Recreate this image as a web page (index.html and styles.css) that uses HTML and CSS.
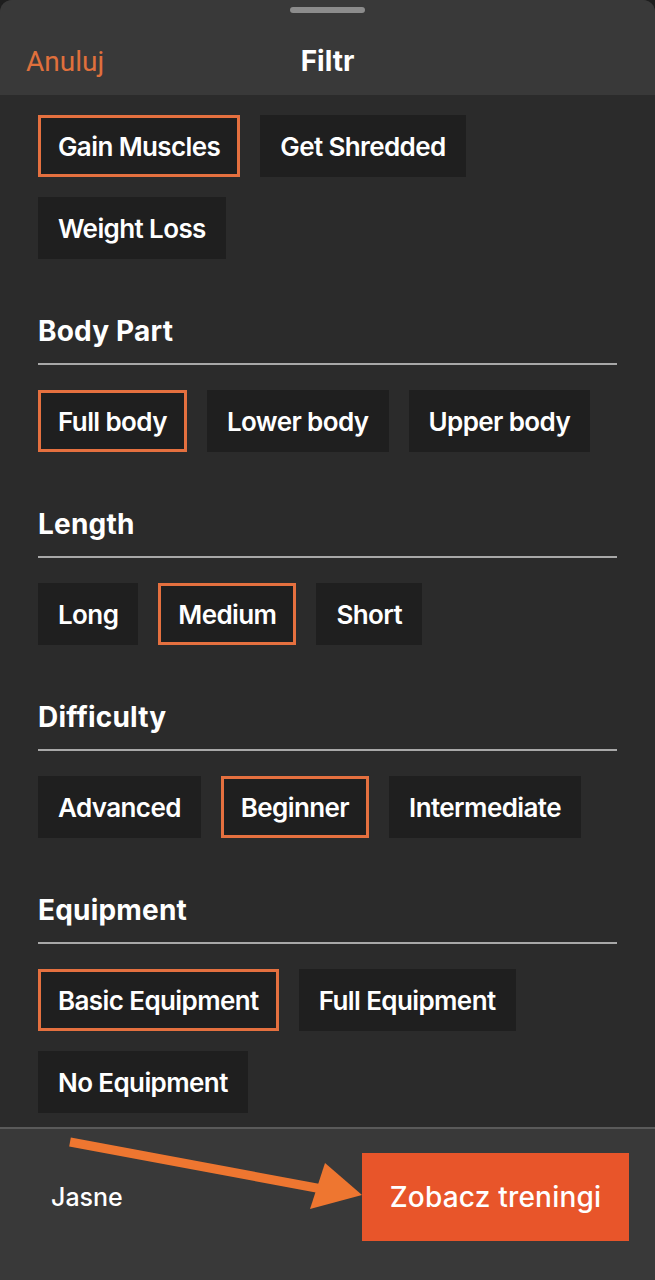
FILE: index.html
```html
<!DOCTYPE html>
<html lang="pl">
<head>
    <meta charset="UTF-8">
    <meta name="viewport" content="width=device-width, initial-scale=1.0">
    <title>Filtr</title>
    <link rel="stylesheet" href="styles.css">
</head>
<body>
    <div class="sheet">
        <div class="sheet-head">
            <div class="handle"></div>
            <div class="title-bar">
                <span class="cancel">Anuluj</span>
                <span class="title">Filtr</span>
            </div>
        </div>

        <div class="content">
            <div class="chips">
                <span class="chip selected">Gain Muscles</span>
                <span class="chip">Get Shredded</span>
                <span class="chip">Weight Loss</span>
            </div>

            <h3 class="section-title">Body Part</h3>
            <div class="chips">
                <span class="chip selected">Full body</span>
                <span class="chip">Lower body</span>
                <span class="chip">Upper body</span>
            </div>

            <h3 class="section-title">Length</h3>
            <div class="chips">
                <span class="chip">Long</span>
                <span class="chip selected">Medium</span>
                <span class="chip">Short</span>
            </div>

            <h3 class="section-title">Difficulty</h3>
            <div class="chips">
                <span class="chip">Advanced</span>
                <span class="chip selected">Beginner</span>
                <span class="chip">Intermediate</span>
            </div>

            <h3 class="section-title">Equipment</h3>
            <div class="chips">
                <span class="chip selected">Basic Equipment</span>
                <span class="chip">Full Equipment</span>
                <span class="chip">No Equipment</span>
            </div>
        </div>

        <div class="footer">
            <span class="clear-btn">Jasne</span>
            <button class="show-btn">Zobacz treningi</button>
            <svg class="arrow" width="655" height="153" viewBox="0 1127 655 153">
                <line x1="70" y1="1142" x2="322" y2="1189" stroke="#ee7630" stroke-width="9"/>
                <polygon points="325,1163 362,1195 310,1209" fill="#ee7630"/>
            </svg>
        </div>
    </div>
</body>
</html>
```

FILE: styles.css
```css
* {
    box-sizing: border-box;
}
body {
    margin: 0;
    background: #1e1e1e;
    font-family: Inter, "Noto Sans", sans-serif;
    color: #fff;
}
.sheet {
    width: 655px;
    height: 1280px;
    background: #2b2b2b;
    border-radius: 12px 12px 0 0;
    overflow: hidden;
    display: flex;
    flex-direction: column;
}
.sheet-head {
    background: #393939;
    height: 95px;
    padding-top: 7px;
}
.handle {
    width: 75px;
    height: 6px;
    margin: 0 auto;
    background: #8c8c8c;
    border-radius: 3px;
}
.title-bar {
    position: relative;
    height: 60px;
    display: flex;
    align-items: center;
    justify-content: center;
    margin-top: 18px;
}
.cancel {
    position: absolute;
    left: 26px;
    color: #e0703c;
    font-size: 28px;
    font-weight: 400;
    font-family: Roboto, sans-serif;
}
.title {
    font-size: 28px;
    font-weight: 700;
}
.content {
    flex: 1;
    padding: 20px 38px 0;
}
.chips {
    display: flex;
    flex-wrap: wrap;
    gap: 20px;
}
.chip {
    height: 62px;
    display: flex;
    align-items: center;
    padding: 0 20px;
    background: #1f1f1f;
    font-size: 26px;
    font-weight: 600;
    letter-spacing: -0.6px;
}
.chip.selected {
    border: 3px solid #e5703f;
    padding: 0 17px;
}
.section-title {
    margin: 56px 0 25px;
    font-size: 28px;
    font-weight: 700;
    line-height: 32px;
    padding-bottom: 16px;
    border-bottom: 2px solid #a8a8a8;
    letter-spacing: 0.2px;
}
.footer {
    position: relative;
    height: 153px;
    background: #393939;
    border-top: 2px solid #5a5a5a;
    display: flex;
    align-items: flex-start;
    justify-content: space-between;
    padding: 24px 26px 0 51px;
}
.clear-btn {
    font-size: 25px;
    font-weight: 500;
    line-height: 88px;
}
.show-btn {
    width: 267px;
    height: 88px;
    border: none;
    background: #e8552a;
    color: #fff;
    font-family: Inter, sans-serif;
    font-size: 28px;
    font-weight: 500;
    letter-spacing: 0.2px;
}
.arrow {
    position: absolute;
    left: 0;
    top: -2px;
}
```
